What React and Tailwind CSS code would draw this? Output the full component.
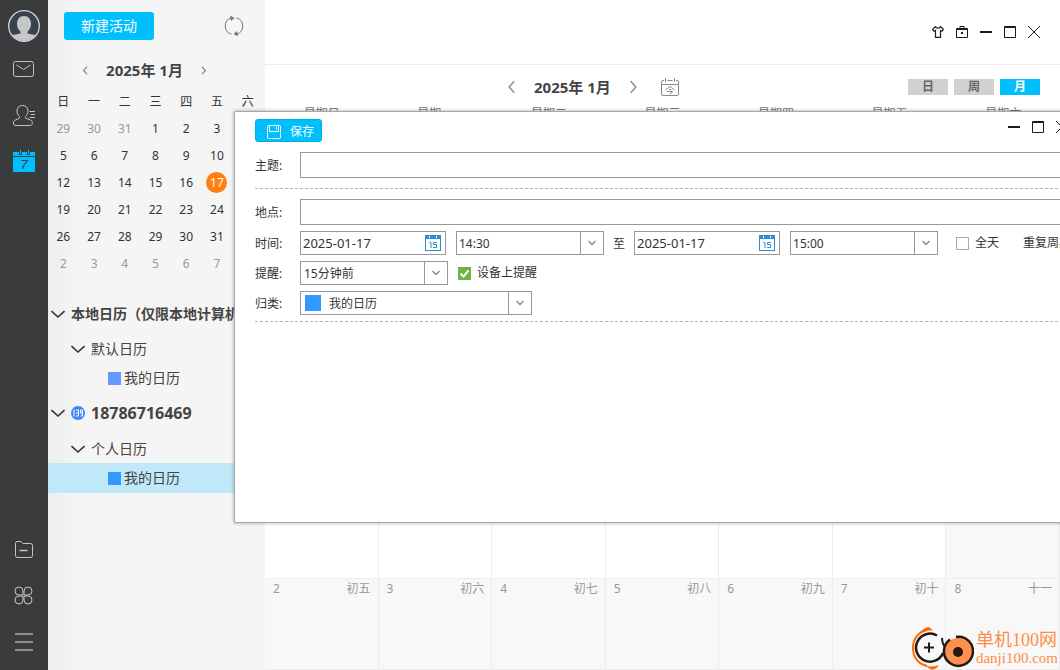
import React, { useState } from 'react'

const WEEKDAYS = ['日', '一', '二', '三', '四', '五', '六']

const MONTH_DAYS = [
    29, 30, 31, 1, 2, 3, 4,
    5, 6, 7, 8, 9, 10, 11,
    12, 13, 14, 15, 16, 17, 18,
    19, 20, 21, 22, 23, 24, 25,
    26, 27, 28, 29, 30, 31, 1,
    2, 3, 4, 5, 6, 7, 8,
]

const LAST_WEEK = [
    { day: 2, lunar: '初五' },
    { day: 3, lunar: '初六' },
    { day: 4, lunar: '初七' },
    { day: 5, lunar: '初八' },
    { day: 6, lunar: '初九' },
    { day: 7, lunar: '初十' },
    { day: 8, lunar: '十一' },
]

const Chevron = ({ className, d, size = 12, width = 1.5 }) => (
    <svg className={className} width={size} height={size} viewBox="0 0 12 12" fill="none" stroke="currentColor" strokeWidth={width}>
        <path d={d} />
    </svg>
)

const LEFT = 'M8 1 3.5 6 8 11'
const RIGHT = 'M4 1 8.500 6 4 11'

const WindowButtons = () => (
    <>
        <button aria-label="最小化" className="text-[#231815]">
            <svg className="block" width="12" height="12" viewBox="0 0 12 12"><path d="M0 5h12v2H0z" fill="currentColor" /></svg>
        </button>
        <button aria-label="最大化" className="text-[#231815]">
            <svg className="block" width="12" height="12" viewBox="0 0 12 12" fill="none" stroke="currentColor">
                <path d="M.5 .5h11v11H.5zM0 1.500h12" />
            </svg>
        </button>
        <button aria-label="关闭" className="text-[#231815]">
            <svg className="block" width="12" height="12" viewBox="0 0 12 12" stroke="currentColor"><path d="M0 0 12 12M12 0 0 12" /></svg>
        </button>
    </>
)

const NavRail = () => (
    <nav className="flex w-12 shrink-0 flex-col items-center gap-[22px] bg-[#3a3b3d] pt-2.5 pb-4 text-[#c4c5c7]">
        <button aria-label="账户" className="-mb-[7px] h-8 w-8">
            <svg width="32" height="32" viewBox="0 0 32 32">
                <defs><clipPath id="face"><circle cx="16" cy="16" r="15" /></clipPath></defs>
                <circle cx="16" cy="16" r="15.300" fill="#394150" stroke="#d8d8d8" strokeWidth="1.300" />
                <g clipPath="url(#face)" fill="#c6c6c8">
                    <path d="M16 6c4.500 0 7 3.500 7 8 0 3.500-1.600 6-3.500 7.500v2c3 1 6.500 1.200 9.500 1.700V32H3v-6.800c3-.5 6.500-.7 9.500-1.700v-2C10.600 20 9 17.500 9 14c0-4.500 2.500-8 7-8z" />
                </g>
            </svg>
        </button>
        <button aria-label="邮件" className="h-6 w-6">
            <svg width="24" height="24" viewBox="0 0 24 24" fill="none" stroke="currentColor">
                <rect x="1.500" y="4.500" width="20" height="15" rx="2" />
                <path d="m4.500 8 7 4.500 7-4.500" />
            </svg>
        </button>
        <button aria-label="联系人" className="h-6 w-6">
            <svg width="24" height="24" viewBox="0 -1 24 24" fill="none" stroke="currentColor">
                <path d="M10.500 1.500c3.500 0 5.500 2.300 5.500 5.500 0 2.400-1 4.300-2.500 5.500-.6.700-.3 1.500.5 1.900l4.500 1.600c1.700.7 2.200 2 1.700 3.800-.2 1-1 1.700-2 1.700H4c-1.700 0-2.600-1-2.500-2.500.1-1.600.7-2.400 2-3L7 14.400c.8-.4 1-1.200.4-1.900C6 11.300 5 9.400 5 7c0-3.200 2-5.500 5.500-5.500z" />
                <path d="M17.500 7.500h5.500M18.500 10.500H23M17.500 13.500h5.500" />
            </svg>
        </button>
        <button aria-label="日历" className="h-6 w-6">
            <svg width="24" height="24" viewBox="0 -1 24 24">
                <path d="M1 2h22v4H1zM1 7h22v15H1z" fill="#00bfff" />
                <path d="M7 0h3v5H7zM15 0h3v5h-3z" fill="#3a3b3d" />
                <path d="M8 0h1v4H8zM16 0h1v4h-1z" fill="#00bfff" />
                <text x="12" y="19" fontSize="13" fontStyle="italic" textAnchor="middle" fill="#3a3b3d" fontFamily="Liberation Sans">7</text>
            </svg>
        </button>
        <button aria-label="文件" className="mt-auto h-6 w-6">
            <svg width="24" height="24" viewBox="1 0 24 24" fill="none" stroke="currentColor">
                <path d="M6 3.500h4l2 2h7.500q2 0 2 2V17.500q0 2-2 2H6.500q-2 0-2-2V5.500q0-2 1.500-2z" />
                <path d="M8.500 12.500h8" strokeWidth="1.500" />
            </svg>
        </button>
        <button aria-label="应用" className="h-6 w-6">
            <svg width="24" height="24" viewBox="0.500 0.500 24 24" fill="none" stroke="currentColor">
                <path d="M11.500 11.500H7.500A4 4 0 1 1 11.500 7.500zM12.500 11.500V7.500a4 4 0 1 1 4 4zM11.500 12.500v4a4 4 0 1 1-4-4zM12.500 12.500h4a4 4 0 1 1-4 4z" />
            </svg>
        </button>
        <button aria-label="菜单" className="h-6 w-6 text-[#8c8d8f]">
            <svg width="24" height="24" viewBox="0 0 24 24"><path d="M3 3h18v2H3zM3 11h18v2H3zM3 19h18v2H3z" fill="currentColor" /></svg>
        </button>
    </nav>
)

const MiniCalendar = () => (
    <section className="mt-[18px]">
        <div className="flex h-6 items-center justify-center gap-4 pr-6 text-[#444]">
            <button aria-label="上个月"><Chevron d={LEFT} size={9} className="text-[#888]" /></button>
            <h2 className="text-[15px] leading-6 font-bold">2025年 1月</h2>
            <button aria-label="下个月"><Chevron d={RIGHT} size={9} className="text-[#888]" /></button>
        </div>
        <div className="mt-1.5 grid grid-cols-7 pr-0.5 text-center text-xs text-[#333]">
            {WEEKDAYS.map((name) => (
                <span key={name} className="h-[27px] leading-[27px]">{name}</span>
            ))}
            {MONTH_DAYS.map((day, i) => {
                if (i === 19) {
                    return (
                        <span key={i} className="flex h-[27px] items-center justify-center">
                            <span className="h-[21px] w-[21px] rounded-full bg-[#ff7f11] leading-[21px] text-white">{day}</span>
                        </span>
                    )
                }
                const outside = i < 3 || i > 33
                return (
                    <span key={i} className={`h-[27px] leading-[27px] ${outside ? 'text-[#999]' : ''}`}>{day}</span>
                )
            })}
        </div>
    </section>
)

const Down = () => (
    <svg width="14" height="14" viewBox="0 0 14 14" fill="none" stroke="#333" strokeWidth="1.600"><path d="m.5 4 6.500 6 6.500-6" /></svg>
)

const CalendarTree = () => (
    <ul className="mt-4 text-sm whitespace-nowrap text-[#444]">
        <li className="flex h-10 items-center gap-1.5 pl-[3px] pt-0.5 font-bold"><Down />本地日历（仅限本地计算机）</li>
        <li className="flex h-[30px] items-center gap-1.5 pt-0.5 pl-[23px]"><Down />默认日历</li>
        <li className="flex h-[30px] items-center gap-[3px] pl-[60px]">
            <i className="h-[13px] w-[13px] bg-[#6699ff]" />我的日历
        </li>
        <li className="flex h-10 items-center gap-1.5 pl-[3px] font-bold">
            <Down />
            <svg width="14" height="14" viewBox="0 0 14 14">
                <circle cx="7" cy="7" r="7" fill="#4285f4" />
                <path d="M3 3.500v7M5 4h2.500v6H5M5 7h2.500M11.500 7H9.500V4h2v6h-2" fill="none" stroke="#fff" />
            </svg>
            <span className="text-base">18786716469</span>
        </li>
        <li className="flex h-[30px] items-center gap-1.5 pt-0.5 pl-[23px]"><Down />个人日历</li>
        <li className="flex h-[30px] items-center gap-[3px] bg-[#c1e8f9] pl-[60px]">
            <i className="h-[13px] w-[13px] bg-[#3399ff]" />我的日历
        </li>
    </ul>
)

const SidePanel = () => (
    <aside className="w-[217px] shrink-0 overflow-hidden bg-linear-to-r from-[#eeeeee] to-[#f5f5f5] to-15%">
        <div className="flex items-center justify-between pt-3 pr-5 pl-4">
            <button className="h-7 w-[90px] rounded-[3px] bg-[#00bfff] text-sm text-white">新建活动</button>
            <button aria-label="同步">
                <svg width="22" height="22" viewBox="0 0 22 22" fill="none" stroke="#777">
                    <path d="M8.500 19.200A8.500 8.500 0 0 1 8.500 2.800M13.500 2.800a8.500 8.500 0 0 1 0 16.400" />
                    <path d="M7 .500 11.500 3 8 6zM15 21.500 10.500 19 14 16z" fill="#777" stroke="none" />
                </svg>
            </button>
        </div>
        <MiniCalendar />
        <CalendarTree />
    </aside>
)

const MonthView = () => (
    <main className="flex min-w-0 flex-1 flex-col bg-white">
        <header className="flex h-[65px] items-center justify-end gap-3 border-b border-[#ececec] pr-5">
            <button aria-label="换肤">
                <svg className="block" width="12" height="12" viewBox="0 0 12 12" fill="none" stroke="#231815" strokeWidth="1.200">
                    <path d="M3.500 .6 .6 3.300l1.400 2 1.500-.8v6.900h5V4.500l1.500.8 1.400-2L8.500 .6C8 2.600 4 2.600 3.500 .6z" />
                </svg>
            </button>
            <button aria-label="锁定">
                <svg className="block" width="12" height="12" viewBox="0 0 12 12" fill="none" stroke="#231815">
                    <path d="M.5 2.500h11v9H.5zM0 3.500h12M4 2V.5h4V2" />
                    <path d="M5 6h2v2H5z" fill="#231815" stroke="none" />
                </svg>
            </button>
            <WindowButtons />
        </header>
        <div className="flex h-10 items-center justify-between pt-1 pr-5 pl-60">
            <div className="flex items-center text-[#444]">
                <button aria-label="上个月"><Chevron d={LEFT} size={14} width={1.2} className="text-[#888]" /></button>
                <h1 className="mx-[15px] text-[15px] leading-6 font-bold whitespace-nowrap">2025年 1月</h1>
                <button aria-label="下个月"><Chevron d={RIGHT} size={14} width={1.2} className="text-[#888]" /></button>
                <button aria-label="今天" className="ml-[21px]">
                    <svg className="block" width="18" height="18" viewBox="0 0 18 18" fill="none" stroke="#888">
                        <path d="M3 2.500H2Q.5 2.500 .5 4v12q0 1.500 1.500 1.500h14q1.500 0 1.500-1.500V4q0-1.500-1.500-1.500h-1M6.500 2.500h5M.5 6.500h17" />
                        <path d="M4.500 0v4M13.500 0v4" />
                        <path d="M4.500 12 9 8.500l4.500 3.500M8 11.500h2M6 13.500h5.500L9 16.500" />
                    </svg>
                </button>
            </div>
            <div className="flex gap-1.5 text-xs font-bold text-[#666]">
                <button className="h-4 w-10 bg-[#d0d0d0] leading-4">日</button>
                <button className="h-4 w-10 bg-[#d0d0d0] leading-4">周</button>
                <button className="h-4 w-10 bg-[#00bfff] leading-4 text-white">月</button>
            </div>
        </div>
        <div className="grid h-[17px] grid-cols-7 pt-px text-center text-xs leading-4 text-[#777]">
            {WEEKDAYS.map((name) => <span key={name}>星期{name}</span>)}
        </div>
        <div className="grid flex-1 grid-cols-7 grid-rows-6 text-xs leading-5 text-[#999]">
            {MONTH_DAYS.slice(0, 35).map((day, i) => (
                <div key={i} className={`border-r border-b border-[#ececec] ${i < 3 || i > 33 ? 'bg-[#f8f8f8]' : ''}`} />
            ))}
            {LAST_WEEK.map(({ day, lunar }) => (
                <div key={day} className="flex justify-between border-r border-b border-[#ececec] bg-[#f8f8f8] pr-[7px] pl-2">
                    <span>{day}</span>
                    <span>{lunar}</span>
                </div>
            ))}
        </div>
    </main>
)

const DateField = ({ id, label }) => (
    <div className="flex h-6 w-[146px] shrink-0 items-center border border-[#999] pr-1 pl-0.5">
        <input id={id} aria-label={label} defaultValue="2025-01-17" className="min-w-0 flex-1 pt-px text-[13px] outline-none" />
        <svg width="16" height="16" viewBox="0 0 16 16">
            <path d="M0 0h16v16H0z" fill="#2b8fcc" />
            <path d="M1 4h14v11H1zM4 1h1v2H4zM11 1h1v2h-1z" fill="#fff" />
            <path d="M4.500 7.500H6v5.500M12 7.500H8.500v2h3v3H8" fill="none" stroke="#2b8fcc" />
        </svg>
    </div>
)

const SelectField = ({ id, label, value, className, inset = 'pl-0.5' }) => (
    <div className={`relative h-6 shrink-0 border border-[#999] ${className}`}>
        <select id={id} aria-label={label} defaultValue={value} className={`block h-full w-full appearance-none pt-0.5 outline-none ${inset}`}>
            <option>{value}</option>
        </select>
        <span className="pointer-events-none absolute inset-y-0 right-0 flex w-[23px] items-center justify-center border-l border-[#999]">
            <svg width="8" height="8" viewBox="0 0 8 8" fill="none" stroke="#888" strokeWidth="1.400"><path d="m.5 2 3.500 3.500L7.500 2" /></svg>
        </span>
    </div>
)

const EventDialog = () => {
    const [allDay, setAllDay] = useState(false)
    const [remind, setRemind] = useState(true)

    return (
        <section
            role="dialog"
            aria-label="新建活动"
            className="absolute top-[111px] -right-8 left-[234px] h-[412px] rounded-xs border border-[#a8a8a8] bg-white pr-[23px] pl-5 text-xs text-[#333] shadow-[0_0_3px_1px_rgba(0,0,0,0.2)]"
        >
            <div className="flex items-start justify-between pt-[7px]">
                <button className="flex h-[23px] w-[67px] items-center gap-[9px] rounded-[3px] border border-[#00aeea] bg-[#00bfff] pt-0.5 pl-[11px] text-white">
                    <svg width="14" height="14" viewBox="0 0 14 14" fill="none" stroke="#fff">
                        <path d="M1.500 .5h11q1 0 1 1v11q0 1-1 1h-11q-1 0-1-1v-11q0-1 1-1zM2.500 .5v6h9v-6M9.500 2v2.500" />
                    </svg>
                    保存
                </button>
                <div className="flex gap-3 pt-0.5"><WindowButtons /></div>
            </div>
            <div className="mt-2.5 flex items-center border-b border-dashed border-[#b4b4b4] pb-2.5">
                <label htmlFor="subject" className="w-[45px] shrink-0 pt-0.5">主题:</label>
                <input id="subject" className="h-[26px] min-w-0 flex-1 border border-[#999] px-1 outline-none" />
            </div>
            <div className="flex flex-col gap-1.5 border-b border-dashed border-[#b4b4b4] pt-2.5 pb-1.5">
                <div className="flex items-center">
                    <label htmlFor="place" className="w-[45px] shrink-0 pt-0.5">地点:</label>
                    <input id="place" className="h-[26px] min-w-0 flex-1 border border-[#999] px-1 outline-none" />
                </div>
                <div className="flex items-center whitespace-nowrap">
                    <label htmlFor="start-date" className="w-[45px] shrink-0 pt-0.5">时间:</label>
                    <DateField id="start-date" label="开始日期" />
                    <SelectField id="start-time" label="开始时间" value="14:30" className="ml-2.5 w-[148px]" />
                    <span className="mx-[9px] pt-0.5">至</span>
                    <DateField id="end-date" label="结束日期" />
                    <SelectField id="end-time" label="结束时间" value="15:00" className="ml-2.5 w-[148px]" />
                    <label className="ml-[18px] flex items-center gap-1.5">
                        <input
                            type="checkbox"
                            checked={allDay}
                            onChange={() => setAllDay(!allDay)}
                            className="h-[13px] w-[13px] appearance-none border border-[#aaa] checked:bg-[#6cb544]"
                        />
                        全天
                    </label>
                    <span className="ml-6">重复周期:</span>
                </div>
                <div className="flex items-center">
                    <label htmlFor="remind" className="w-[45px] shrink-0 pt-0.5">提醒:</label>
                    <SelectField id="remind" value="15分钟前" className="w-[148px]" inset="pl-[3px]" />
                    <label className="ml-2.5 flex items-center gap-1.5">
                        <span className="relative h-[13px] w-[13px]">
                            <input
                                type="checkbox"
                                checked={remind}
                                onChange={() => setRemind(!remind)}
                                className="block h-[13px] w-[13px] appearance-none border border-[#6cb544] checked:bg-[#6cb544]"
                            />
                            {remind && (
                                <svg className="pointer-events-none absolute inset-0" width="13" height="13" viewBox="0 0 13 13" fill="none" stroke="#fff" strokeWidth="2">
                                    <path d="m2.500 6.500 3 3 5-6" />
                                </svg>
                            )}
                        </span>
                        设备上提醒
                    </label>
                </div>
                <div className="flex items-center">
                    <label htmlFor="category" className="w-[45px] shrink-0 pt-0.5">归类:</label>
                    <div className="relative">
                        <SelectField id="category" value="我的日历" className="w-[232px]" inset="pl-7" />
                        <i className="pointer-events-none absolute top-1 left-[5px] h-4 w-4 bg-[#3399ff]" />
                    </div>
                </div>
            </div>
        </section>
    )
}

const Watermark = () => (
    <div className="absolute right-0.5 bottom-0 flex items-center gap-0.5 text-[#ff8c4a]">
        <svg width="64" height="44" viewBox="0 1 64 44" fill="none">
            <path d="M17 5C8 7 3 14 3 23s5 16 14 18" stroke="#ff6a00" strokeWidth="2" />
            <path d="M10 7Q15 2 19 2l4 3.500Q15 5 10 7zM14 40q7 3 15 0-3 5-8 4.500z" fill="#ff6a00" />
            <path d="M27 10.500A14 14 0 1 0 33 28" stroke="#231815" strokeWidth="2.500" />
            <path d="M32 13q0 4 2 8" stroke="#231815" strokeWidth="2" />
            <path d="M14 22.500h10M19 17.500v10" stroke="#231815" strokeWidth="2" />
            <circle cx="48" cy="27" r="14" fill="#ff914d" />
            <path d="M46 12a14.500 14.500 0 1 1-6 2.500" stroke="#231815" strokeWidth="2.500" />
            <circle cx="48" cy="27" r="5" fill="#231815" />
        </svg>
        <div className="whitespace-nowrap font-['Liberation_Serif','Noto_Sans_CJK_SC',serif]">
            <p className="text-lg leading-5">单机100网</p>
            <p className="text-[15px] leading-4">danji100.com</p>
        </div>
    </div>
)

const App = () => {
    return (
        <div className="relative flex min-h-screen overflow-hidden bg-white font-['Noto_Sans','Noto_Sans_CJK_SC',sans-serif]">
            <NavRail />
            <SidePanel />
            <MonthView />
            <EventDialog />
            <Watermark />
        </div>
    );
}

export default App
